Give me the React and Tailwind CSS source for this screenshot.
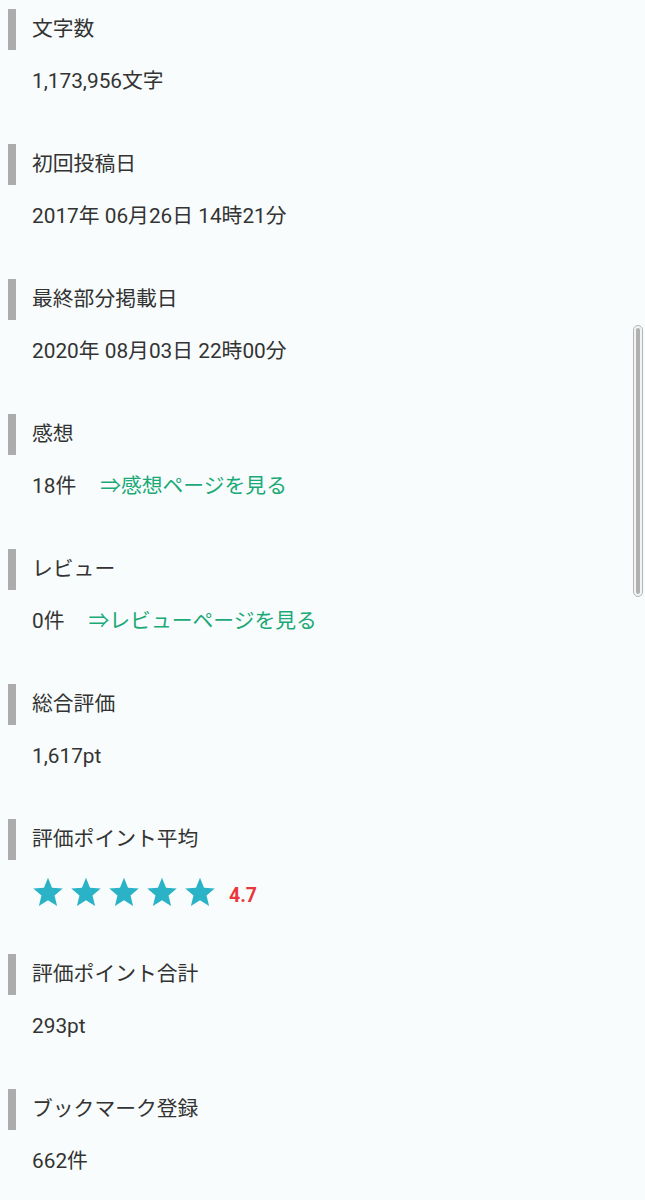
import React from "react";

const font = { fontFamily: 'Roboto, "Noto Sans CJK JP", sans-serif' };

function Star() {
  return (
    <svg width="32" height="30" viewBox="0 0 24 23" className="shrink-0">
      <path d="M12 0.6l3.09 7.6 8.2.62-6.27 5.33 1.96 8-6.98-4.33-6.98 4.33 1.96-8L.71 8.82l8.2-.62z" fill="#2ab3c6" />
    </svg>
  );
}

function Section({ title, children }) {
  return (
    <div className="mb-[47px]">
      <div className="ml-2 flex h-[41px] items-center border-l-[8px] border-[#acacac] pb-[1px] pl-4 text-[20.8px] text-[#333]">
        <span className="translate-y-[1px]">{title}</span>
      </div>
      <div className="mt-[17px] flex h-[30px] items-center pl-8 text-[20.8px] text-[#333]">
        {children}
      </div>
    </div>
  );
}

export default function App() {
  return (
    <div className="relative min-h-[1200px] w-[645px] overflow-hidden bg-[#f8fcfc] pt-[9px]" style={font}>
      <Section title="文字数">1,173,956文字</Section>
      <Section title="初回投稿日">2017年 06月26日 14時21分</Section>
      <Section title="最終部分掲載日">2020年 08月03日 22時00分</Section>
      <Section title="感想">
        <span>18件</span>
        <span className="ml-[24px] text-[#1aa977]">⇒感想ページを見る</span>
      </Section>
      <Section title="レビュー">
        <span>0件</span>
        <span className="ml-[24px] text-[#1aa977]">⇒レビューページを見る</span>
      </Section>
      <Section title="総合評価">1,617pt</Section>
      <Section title="評価ポイント平均">
        <div className="flex items-center gap-[6px]">
          <Star />
          <Star />
          <Star />
          <Star />
          <Star />
        </div>
        <span className="ml-[13px] mt-[8px] text-[19.5px] font-bold text-[#e8383d]">4.7</span>
      </Section>
      <Section title="評価ポイント合計">293pt</Section>
      <Section title="ブックマーク登録">662件</Section>
      <div className="absolute left-[633px] top-[325px] flex h-[272px] w-[10px] justify-center rounded-full border border-[#b5b5b5] bg-[#f2f4f4]">
        <div className="my-[2px] w-[4px] rounded-full bg-[#b0b0b0]" />
      </div>
    </div>
  );
}
